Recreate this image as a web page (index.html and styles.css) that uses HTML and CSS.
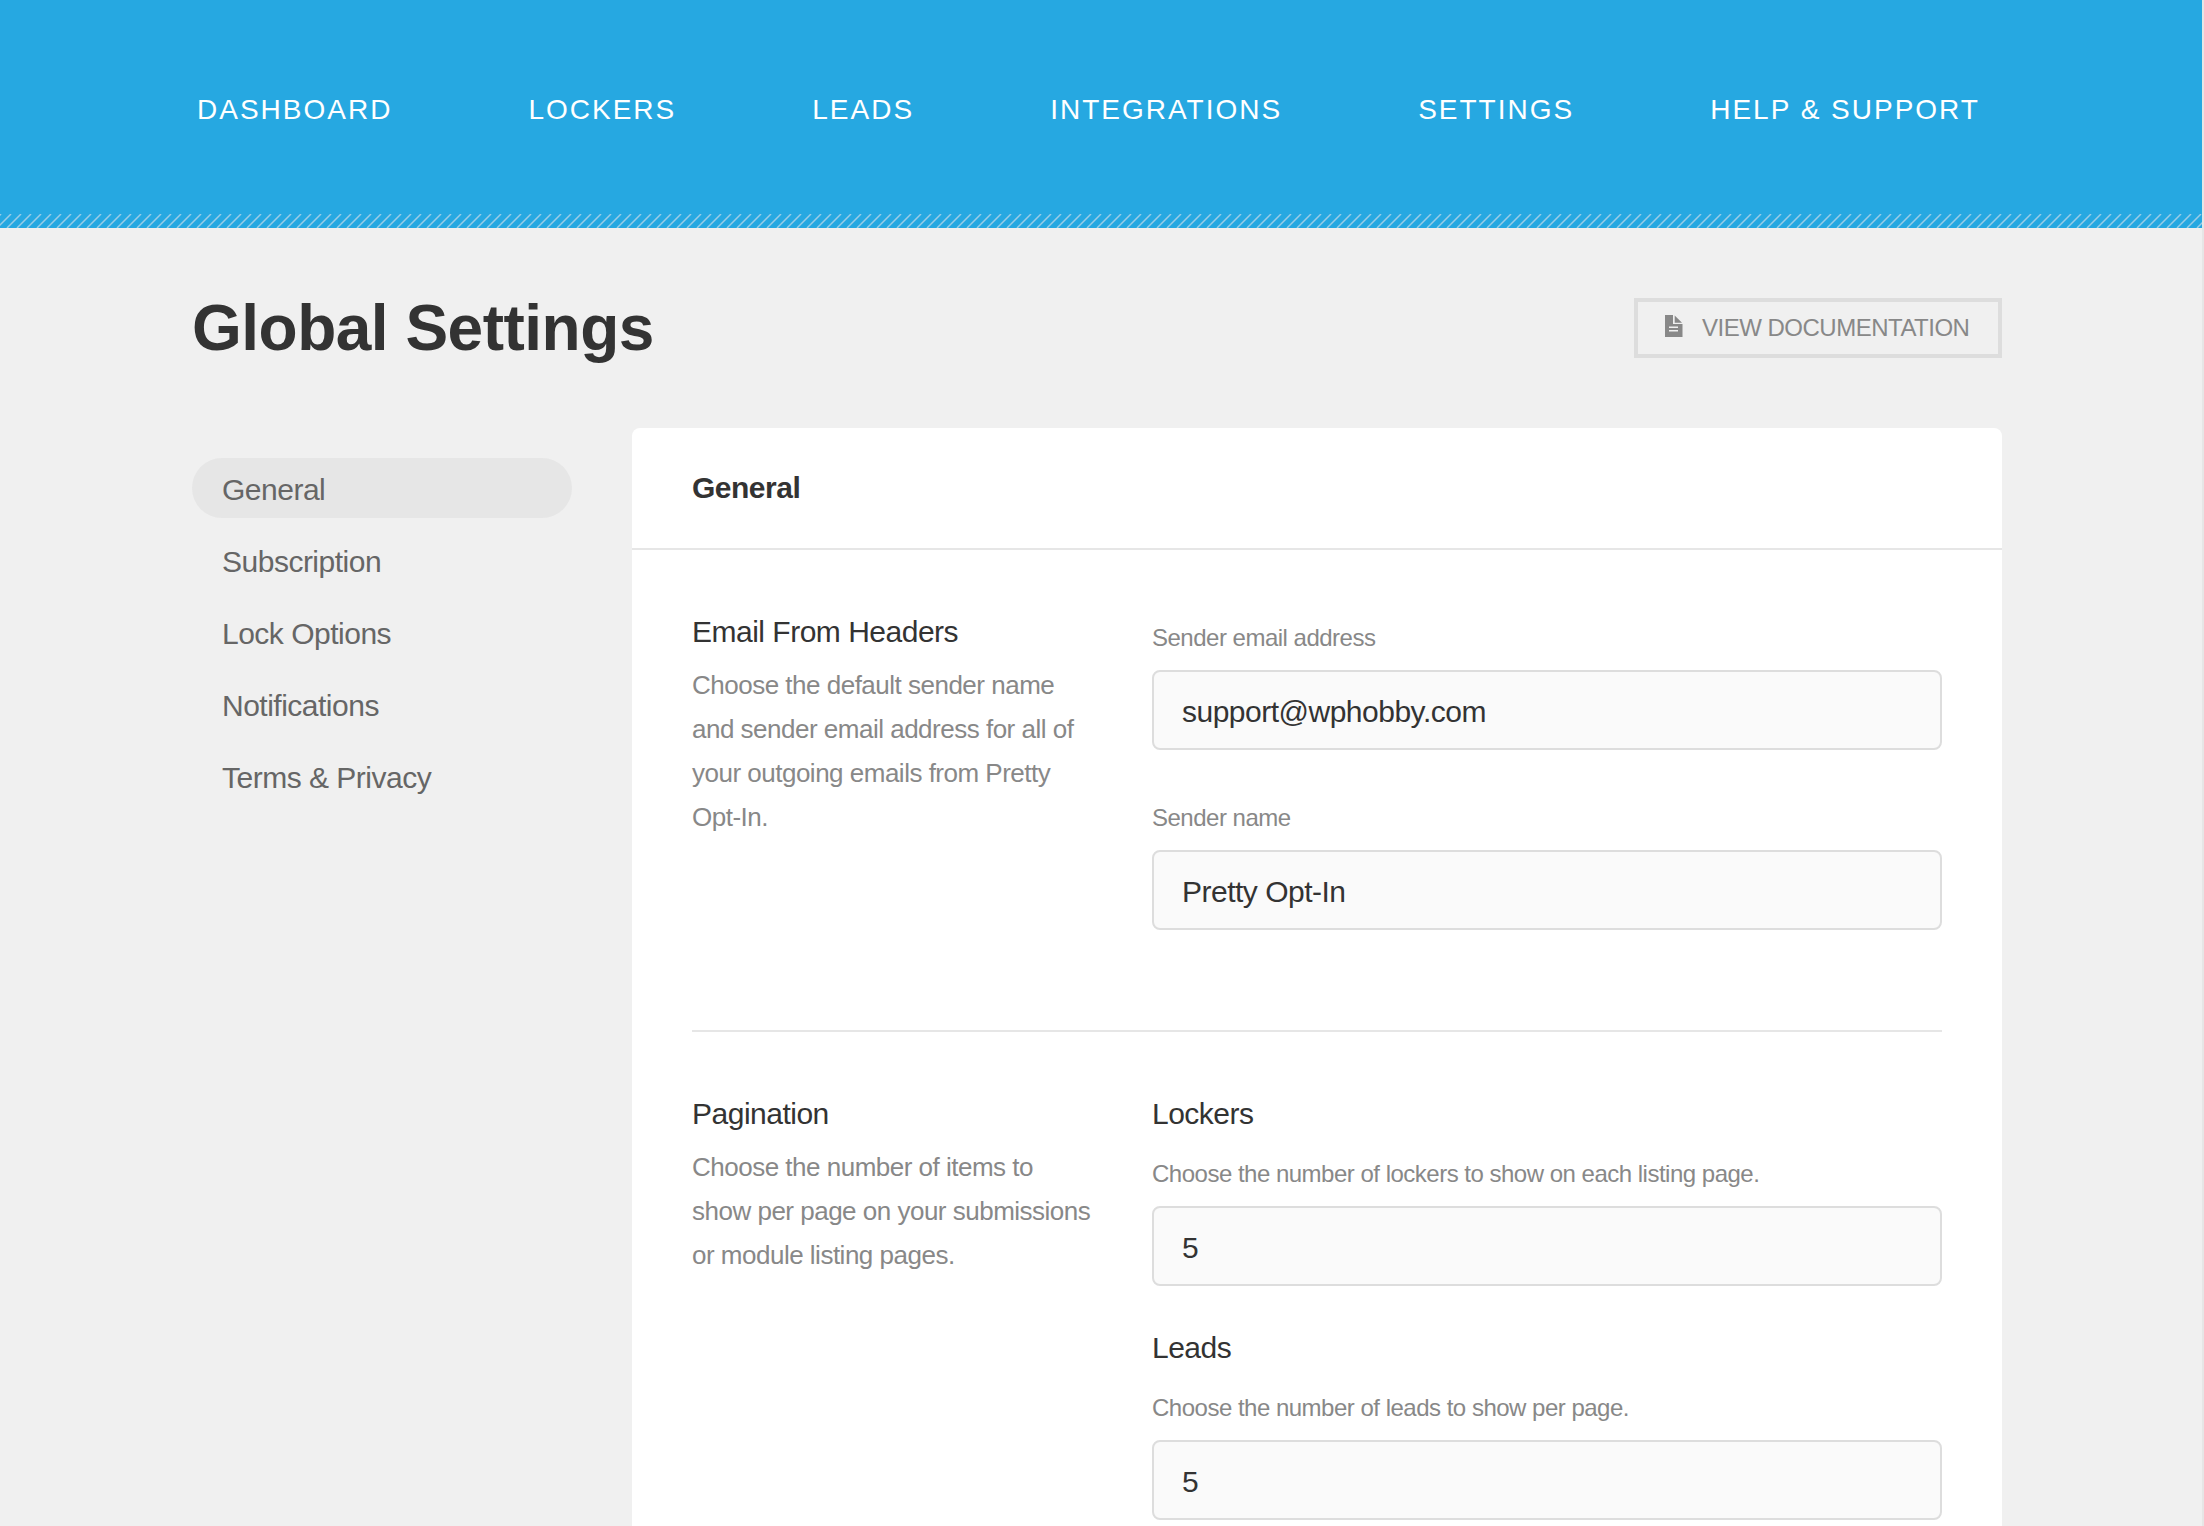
FILE: index.html
```html
<!DOCTYPE html>
<html lang="en">
<head>
<meta charset="utf-8">
<title>Global Settings</title>
<link rel="stylesheet" href="styles.css">
</head>
<body>
<div class="page">
  <header class="topbar">
    <nav class="nav">
      <a>DASHBOARD</a><a>LOCKERS</a><a>LEADS</a><a>INTEGRATIONS</a><a>SETTINGS</a><a>HELP &amp; SUPPORT</a>
    </nav>
    <svg class="stripes" width="100%" height="14" aria-hidden="true">
      <defs><pattern id="hatch" width="10" height="14" patternUnits="userSpaceOnUse">
        <path d="M-13 14 L1 0 M-3 14 L11 0 M7 14 L21 0" stroke="#9acce6" stroke-width="1.500" fill="none"/>
      </pattern></defs>
      <rect width="100%" height="14" fill="url(#hatch)"/>
    </svg>
  </header>
  <main class="content">
    <div class="heading">
      <h1>Global Settings</h1>
      <a class="doc-button">
        <svg width="18" height="22" viewBox="0 0 18 22" aria-hidden="true">
          <path fill="#888" fill-rule="evenodd" d="M0 0H8V9H17.500V22H0ZM4 11.500V13H13V11.500ZM4 15V16.500H13V15Z"/>
          <path fill="#888" d="M9.700 0.500L17 7.800H9.700Z"/>
        </svg>
        <span>VIEW DOCUMENTATION</span>
      </a>
    </div>
    <div class="columns">
      <ul class="side">
        <li class="current">General</li>
        <li>Subscription</li>
        <li>Lock Options</li>
        <li>Notifications</li>
        <li>Terms &amp; Privacy</li>
      </ul>
      <section class="panel">
        <h2>General</h2>
        <div class="row row-first">
          <div class="about">
            <h3>Email From Headers</h3>
            <p>Choose the default sender name and sender email address for all of your outgoing emails from Pretty Opt-In.</p>
          </div>
          <div class="fields fields-plain">
            <div class="field"><label>Sender email address</label><div class="input">support@wphobby.com</div></div>
            <div class="field"><label>Sender name</label><div class="input">Pretty Opt-In</div></div>
          </div>
        </div>
        <div class="row">
          <div class="about">
            <h3>Pagination</h3>
            <p>Choose the number of items to show per page on your submissions or module listing pages.</p>
          </div>
          <div class="fields">
            <div class="field"><h3>Lockers</h3><label>Choose the number of lockers to show on each listing page.</label><div class="input">5</div></div>
            <div class="field"><h3>Leads</h3><label>Choose the number of leads to show per page.</label><div class="input">5</div></div>
          </div>
        </div>
      </section>
    </div>
  </main>
</div>
</body>
</html>
```
FILE: styles.css
```css
* { box-sizing: border-box; margin: 0; padding: 0; }
html { background: #e6e6e6; }
body {
  height: 1526px;
  overflow: hidden;
  padding-right: 2px;
  font-family: "Liberation Sans", Arial, sans-serif;
  font-size: 30px;
  letter-spacing: -0.5px;
  color: #333;
}
.page { height: 1526px; overflow: hidden; background: #f0f0f0; }

.topbar { display: flex; flex-direction: column; height: 228px; background: #26a8e1; }
.nav {
  flex: 1;
  display: flex;
  justify-content: space-between;
  width: 1783px;
  margin-left: 197px;
  padding-top: 90px;
  font-size: 28px;
  line-height: 40px;
  letter-spacing: 2px;
  color: #fff;
}
.stripes { display: block; }

.content { width: 1810px; margin-left: 192px; }
.heading { display: flex; justify-content: space-between; align-items: center; height: 200px; }
h1 { font-size: 64px; line-height: 80px; }
.doc-button {
  display: flex;
  align-items: center;
  width: 368px;
  height: 60px;
  padding-left: 27px;
  border: 4px solid #ddd;
  font-size: 24px;
  color: #888;
}
.doc-button svg { margin: 0 19px 4px 0; }

.columns { display: flex; gap: 60px; }
.side { width: 380px; padding-top: 30px; list-style: none; color: #666; }
.side li { height: 60px; margin-bottom: 12px; padding: 2px 30px 0; border-radius: 30px; line-height: 60px; }
.side .current { background: #e6e6e6; }

.panel { width: 1370px; height: 1200px; background: #fff; border-radius: 8px; }
h2 { height: 122px; padding-left: 60px; border-bottom: 2px solid #e6e6e6; font-size: 30px; line-height: 120px; }
h3 { font-size: 30px; font-weight: 400; line-height: 44px; }
.row { display: flex; justify-content: space-between; margin: 0 60px; padding-top: 60px; }
.row-first { height: 482px; border-bottom: 2px solid #e6e6e6; }
.about { width: 402px; }
.about p { margin-top: 9px; font-size: 26px; line-height: 44px; color: #888; }
.fields { display: flex; flex-direction: column; gap: 40px; width: 790px; }
.fields-plain { gap: 48px; padding-top: 8px; }
.field { display: flex; flex-direction: column; }
.field h3 { margin-bottom: 18px; }
label { font-size: 24px; line-height: 40px; color: #888; }
.input {
  height: 80px;
  margin-top: 12px;
  padding: 2px 28px 0;
  border: 2px solid #ddd;
  border-radius: 8px;
  background: #fafafa;
  line-height: 76px;
}
```
